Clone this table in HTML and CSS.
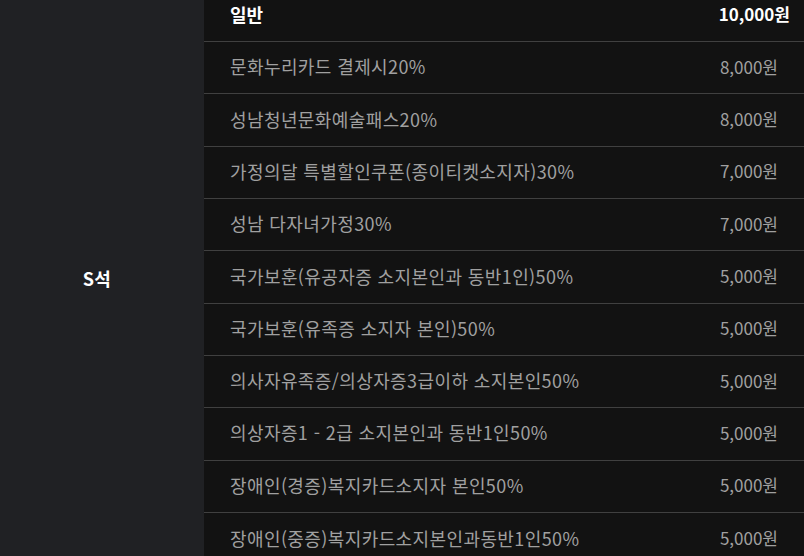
FILE: index.html
```html
<!DOCTYPE html>
<html lang="ko">
<head>
<meta charset="utf-8">
<link rel="stylesheet" href="styles.css">
</head>
<body>
<div class="table">
  <div class="seat">S석</div>
  <div class="rows">
    <div class="row head"><span class="label">일반</span><span class="price">10,000원</span></div>
    <div class="row"><span class="label">문화누리카드 결제시20%</span><span class="price">8,000원</span></div>
    <div class="row"><span class="label">성남청년문화예술패스20%</span><span class="price">8,000원</span></div>
    <div class="row"><span class="label">가정의달 특별할인쿠폰(종이티켓소지자)30%</span><span class="price">7,000원</span></div>
    <div class="row"><span class="label">성남 다자녀가정30%</span><span class="price">7,000원</span></div>
    <div class="row"><span class="label">국가보훈(유공자증 소지본인과 동반1인)50%</span><span class="price">5,000원</span></div>
    <div class="row"><span class="label">국가보훈(유족증 소지자 본인)50%</span><span class="price">5,000원</span></div>
    <div class="row"><span class="label">의사자유족증/의상자증3급이하 소지본인50%</span><span class="price">5,000원</span></div>
    <div class="row"><span class="label">의상자증1 - 2급 소지본인과 동반1인50%</span><span class="price">5,000원</span></div>
    <div class="row"><span class="label">장애인(경증)복지카드소지자 본인50%</span><span class="price">5,000원</span></div>
    <div class="row last"><span class="label">장애인(중증)복지카드소지본인과동반1인50%</span><span class="price">5,000원</span></div>
  </div>
</div>
</body>
</html>
```
FILE: styles.css
```css
html, body {
  margin: 0;
  padding: 0;
  background: #121212;
  overflow: hidden;
}
body {
  font-family: "Noto Sans CJK KR", "Noto Sans", sans-serif;
  font-size: 18px;
  letter-spacing: 0.4px;
}
.table {
  display: flex;
  margin-top: -10.3px;
  width: 804px;
}
.seat {
  width: 204px;
  flex: none;
  background: #202124;
  color: #ffffff;
  font-weight: 700;
  font-size: 18px;
  display: flex;
  align-items: center;
  justify-content: center;
  padding-right: 10px;
  box-sizing: border-box;
}
.rows {
  flex: 1;
  display: flex;
  flex-direction: column;
}
.row {
  height: 52.33px;
  box-sizing: border-box;
  border-bottom: 1px solid #404040;
  display: flex;
  align-items: center;
  justify-content: space-between;
  padding: 0 26px 3px;
  color: #a0a0a0;
}
.row.last {
  border-bottom: none;
}
.price {
  font-size: 17px;
  letter-spacing: 0;
}
.row.head {
  color: #ffffff;
  font-weight: 700;
  padding-right: 14px;
  letter-spacing: 0;
}
```
